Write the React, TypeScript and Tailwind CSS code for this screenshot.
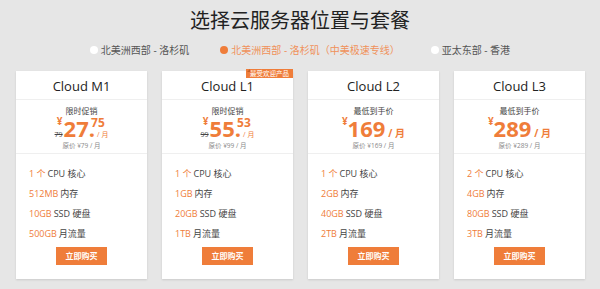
import React from 'react'

type Plan = {
  name: string
  tag: string
  int: string
  dec?: string
  old?: string
  orig: string
  cpu: string
  ram: string
  disk: string
  bw: string
  badge?: string
}

const PLANS: Plan[] = [
  { name: 'Cloud M1', tag: '限时促销', int: '27', dec: '75', old: '79', orig: '原价 ¥79 / 月', cpu: '1 个', ram: '512MB', disk: '10GB', bw: '500GB' },
  { name: 'Cloud L1', tag: '限时促销', int: '55', dec: '53', old: '99', orig: '原价 ¥99 / 月', cpu: '1 个', ram: '1GB', disk: '20GB', bw: '1TB', badge: '最受欢迎产品' },
  { name: 'Cloud L2', tag: '最低到手价', int: '169', orig: '原价 ¥169 / 月', cpu: '1 个', ram: '2GB', disk: '40GB', bw: '2TB' },
  { name: 'Cloud L3', tag: '最低到手价', int: '289', orig: '原价 ¥289 / 月', cpu: '2 个', ram: '4GB', disk: '80GB', bw: '3TB' },
]

const REGIONS = [
  { label: '北美洲西部 - 洛杉矶', active: false },
  { label: '北美洲西部 - 洛杉矶（中美极速专线）', active: true },
  { label: '亚太东部 - 香港', active: false },
]

function Price({ plan }: { plan: Plan }) {
  if (plan.dec) {
    return (
      <div className="flex justify-center h-[22px] leading-none">
        <div className="flex flex-col justify-between items-end mr-[1px]">
          <span className="text-[10px] font-bold text-[#ef7d3a] leading-[9px]">¥</span>
          <span className="text-[7px] text-[#444] line-through leading-[8px]">{plan.old}</span>
        </div>
        <span className="text-[22px] font-bold text-[#ef7d3a] leading-[22px]">{plan.int}.</span>
        <div className="flex flex-col justify-between -ml-[4px]">
          <span className="text-[12px] font-bold text-[#ef7d3a] leading-[11px]">{plan.dec}</span>
          <span className="text-[7px] text-[#ef7d3a] leading-[8px] pl-[6px]">/ 月</span>
        </div>
      </div>
    )
  }
  return (
    <div className="flex justify-center h-[22px] leading-none">
      <span className="text-[10px] font-bold text-[#ef7d3a] leading-[9px] self-start">¥</span>
      <span className="text-[22px] font-bold text-[#ef7d3a] leading-[22px]">{plan.int}</span>
      <span className="text-[10px] font-bold text-[#ef7d3a] leading-[10px] self-end ml-[3px] pb-[1px]">/ 月</span>
    </div>
  )
}

function PlanCard({ plan }: { plan: Plan }) {
  const rows = [
    [plan.cpu, 'CPU 核心'],
    [plan.ram, '内存'],
    [plan.disk, 'SSD 硬盘'],
    [plan.bw, '月流量'],
  ]
  return (
    <div className="relative w-[131px] h-[208px] bg-white shadow-[0_1px_2px_rgba(0,0,0,0.12)] flex flex-col">
      {plan.badge && (
        <>
          <div className="absolute -top-[2px] right-0 h-[9px] px-[4px] bg-[#ef7d3a] text-white text-[6.5px] leading-[9px]">
            {plan.badge}
          </div>
          <div className="absolute -top-[2px] right-[43px] w-0 h-0 border-l-[3px] border-l-transparent border-b-[3px] border-b-[#c45f24]" />
        </>
      )}
      {/* title */}
      <div className="h-[29px] flex items-center justify-center border-b border-[#efefef] pt-[3px] text-[13px] text-[#222]">
        {plan.name}
      </div>

      {/* price */}
      <div className="h-[54px] pt-[6px] border-b border-[#efefef] flex flex-col items-center">
        <div className="text-[8px] leading-[10px] text-[#444]">{plan.tag}</div>
        <div className="mt-[1px] w-full">
          <Price plan={plan} />
        </div>
        <div className="mt-[2px] text-[6.5px] leading-[9px] text-[#888]">{plan.orig}</div>
      </div>

      {/* specs */}
      <div className="pt-[10px] px-[13px]">
        {rows.map(([v, k]) => (
          <div key={k} className="h-[20px] flex items-center text-[9px] text-[#444]">
            <span className="text-[#ef7d3a]">{v}</span>
            <span className="ml-[2px]">{k}</span>
          </div>
        ))}
      </div>

      <div className="mt-[3px] flex justify-center">
        <button className="w-[51px] h-[18px] bg-[#ef7d3a] text-white text-[8px] font-bold">立即购买</button>
      </div>
    </div>
  )
}

export default function App() {
  return (
    <div
      className="w-[600px] h-[289px] bg-[#e6e6e6] overflow-hidden"
      style={{ fontFamily: '"Open Sans", "Noto Sans CJK SC", sans-serif' }}
    >
      <h1 className="pt-[7px] text-center text-[20px] leading-[28px] text-[#222] font-normal">选择云服务器位置与套餐</h1>

      <div className="mt-[8px] flex justify-center gap-[31px] h-[14px]">
        {REGIONS.map(r => (
          <div key={r.label} className="flex items-center gap-[3px]">
            <span className={`w-[8px] h-[8px] rounded-full ${r.active ? 'bg-[#ef7d3a]' : 'bg-white'}`} />
            <span className={`text-[10px] leading-[14px] ${r.active ? 'text-[#f0915a]' : 'text-[#555]'}`}>{r.label}</span>
          </div>
        ))}
      </div>

      <div className="mt-[14px] pl-[16px] flex gap-[15px]">
        {PLANS.map(p => (
          <PlanCard key={p.name} plan={p} />
        ))}
      </div>
    </div>
  )
}
